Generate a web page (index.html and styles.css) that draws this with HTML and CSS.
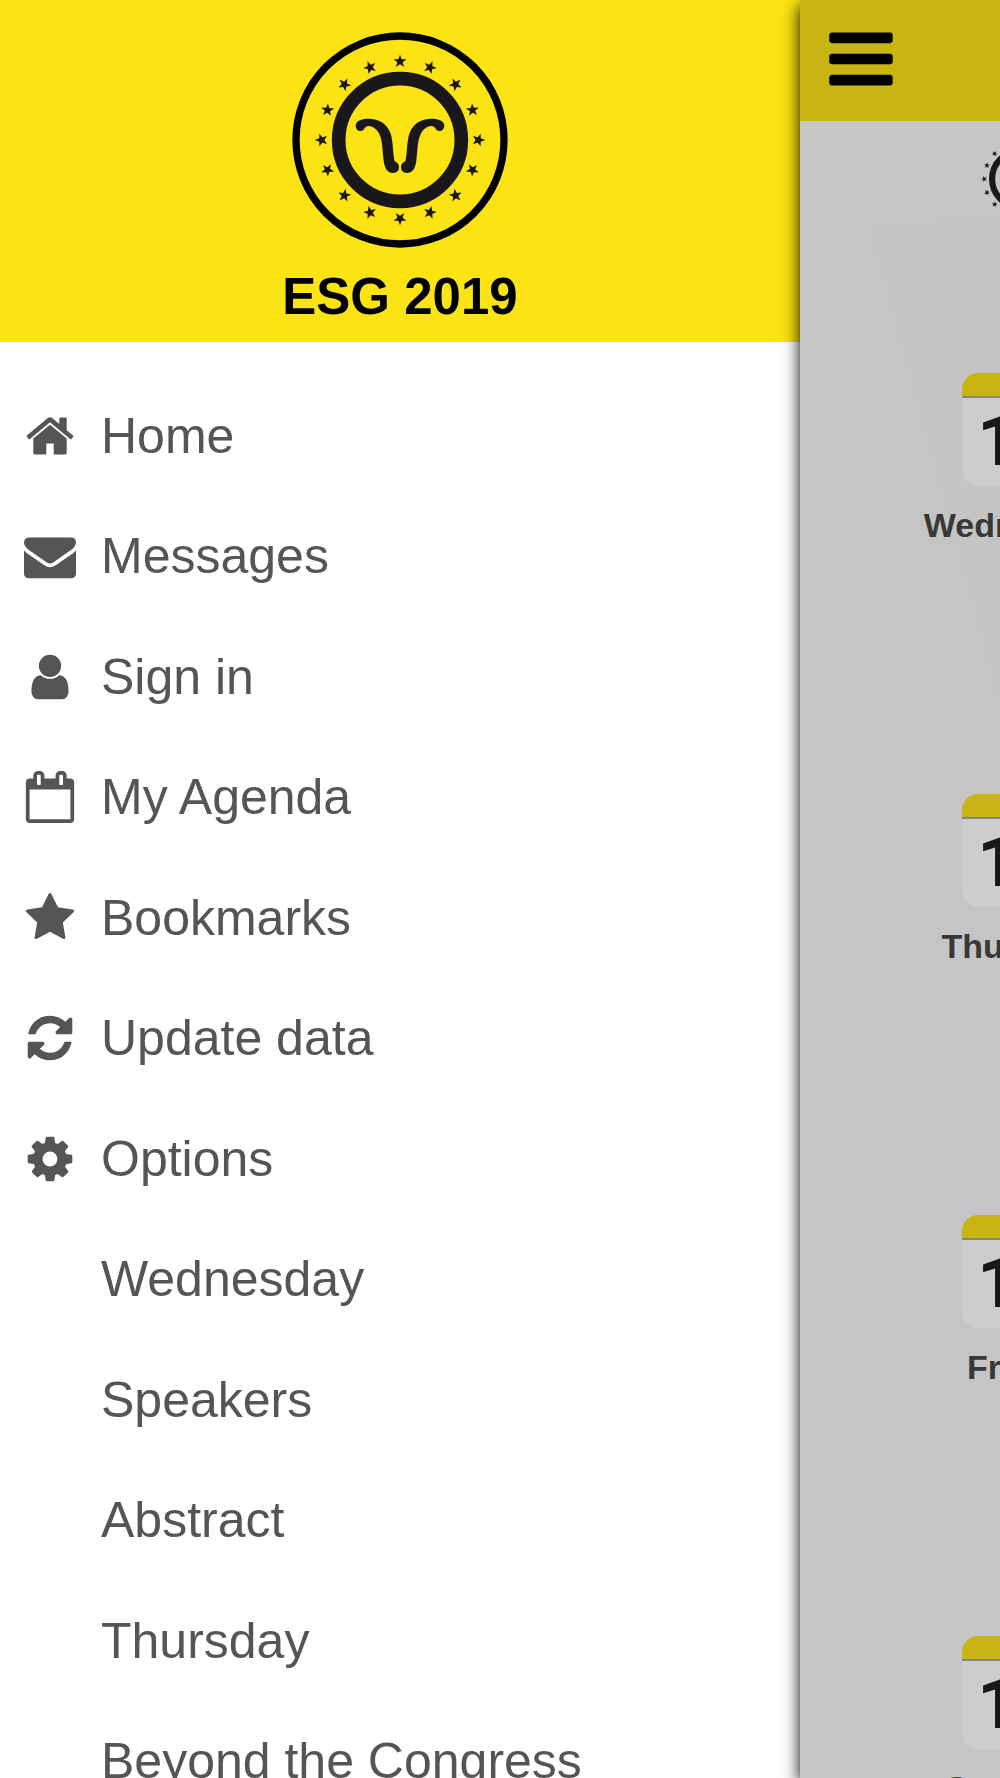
FILE: index.html
```html
<!DOCTYPE html>
<html lang="en">
<head>
<meta charset="utf-8">
<meta name="viewport" content="width=device-width, initial-scale=1">
<title>ESG 2019</title>
<link rel="stylesheet" href="styles.css">
</head>
<body>
<svg class="sprite" aria-hidden="true">
  <symbol id="emblem" viewBox="-204 -257 408 514">
    <defs>
      <path id="star" d="M0-20L5-6H19L8 3L12 17L0 9L-12 17L-8 3L-19-6H-5Z"/>
    </defs>
    <circle r="184" fill="none" stroke="currentColor" stroke-width="41"/>
    <g fill="currentColor">
      <use href="#star" transform="translate(0 -236)"/>
      <use href="#star" transform="translate(90 -218) rotate(22.5)"/>
      <use href="#star" transform="translate(167 -167) rotate(45)"/>
      <use href="#star" transform="translate(218 -90) rotate(67.5)"/>
      <use href="#star" transform="translate(236 0) rotate(90)"/>
      <use href="#star" transform="translate(218 90) rotate(112.5)"/>
      <use href="#star" transform="translate(167 167) rotate(135)"/>
      <use href="#star" transform="translate(90 218) rotate(157.5)"/>
      <use href="#star" transform="translate(0 236) rotate(180)"/>
      <use href="#star" transform="translate(-90 218) rotate(202.5)"/>
      <use href="#star" transform="translate(-167 167) rotate(225)"/>
      <use href="#star" transform="translate(-218 90) rotate(247.5)"/>
      <use href="#star" transform="translate(-236 0) rotate(270)"/>
      <use href="#star" transform="translate(-218 -90) rotate(292.5)"/>
      <use href="#star" transform="translate(-167 -167) rotate(315)"/>
      <use href="#star" transform="translate(-90 -218) rotate(337.5)"/>
      <path id="horn" d="M-133-43C-133-57-116-64-95-64C-64-64-40-50-29-22C-20 2-22 40-16 64C-8 67-3 73-3 82C-3 93-11 99-20 99C-38 99-46 84-49 62C-53 30-52-2-64-22C-72-35-84-42-94-42C-106-42-108-27-117-27C-127-27-133-34-133-43Z"/>
      <use href="#horn" transform="scale(-1 1)"/>
    </g>
  </symbol>
</svg>

<div class="app">
  <aside class="drawer">
    <header class="drawer-head">
      <svg class="drawer-logo" viewBox="-324 -324 648 648" role="img" aria-label="ESG emblem">
        <circle r="312" fill="none" stroke="#000" stroke-width="22"/>
        <use href="#emblem" x="-204" y="-257" width="408" height="514"/>
      </svg>
      <h1 class="drawer-title">ESG 2019</h1>
    </header>
    <nav aria-label="Main menu">
      <ul class="menu">
        <li><a class="menu-link" href="#home"><svg class="icon" viewBox="0 0 1792 1792"><path d="M1472 992v480q0 26-19 45t-45 19h-384v-384h-256v384h-384q-26 0-45-19t-19-45v-480q0-1 .5-3t.5-3l575-474 575 474q1 2 1 6zm223-69l-62 74q-8 9-21 11h-3q-13 0-21-7l-692-577-692 577q-12 8-24 7-13-2-21-11l-62-74q-8-10-7-23.5t11-21.5l719-599q32-26 76-26t76 26l244 204v-195q0-14 9-23t23-9h192q14 0 23 9t9 23v408l219 182q10 8 11 21.5t-7 23.5z"/></svg>Home</a></li>
        <li><a class="menu-link" href="#messages"><svg class="icon" viewBox="0 0 1792 1792"><path d="M1792 710v794q0 66-47 113t-113 47h-1472q-66 0-113-47t-47-113v-794q44 49 101 87 362 246 497 345 57 42 92.5 65.5t94.5 48 110 24.5h2q51 0 110-24.5t94.5-48 92.5-65.5q170-123 498-345 57-39 100-87zm0-294q0 79-49 151t-122 123q-376 261-468 325-10 7-42.5 31t-54 38.5-52 32.5-57.5 27-50 9h-2q-23 0-50-9t-57.5-27-52-32.5-54-38.5-42.5-31q-91-64-262-182.5t-205-142.5q-62-42-117-115.5t-55-136.5q0-78 41.5-130t118.5-52h1472q65 0 112.5 47t47.5 113z"/></svg>Messages</a></li>
        <li><a class="menu-link" href="#signin"><svg class="icon" viewBox="0 0 1792 1792"><path d="M1536 1399q0 109-62.5 187t-150.5 78h-854q-88 0-150.5-78t-62.5-187q0-85 8.5-160.5t31.5-152 58.5-131 94-89 134.5-34.5q131 128 313 128t313-128q76 0 134.5 34.5t94 89 58.5 131 31.5 152 8.5 160.5zm-256-887q0 159-112.5 271.5t-271.5 112.5-271.5-112.5-112.5-271.5 112.5-271.5 271.5-112.5 271.5 112.5 112.5 271.5z"/></svg>Sign in</a></li>
        <li><a class="menu-link" href="#agenda"><svg class="icon" viewBox="0 0 1792 1792"><path d="M192 1664h1408v-1024h-1408v1024zm384-1216v-288q0-14-9-23t-23-9h-64q-14 0-23 9t-9 23v288q0 14 9 23t23 9h64q14 0 23-9t9-23zm768 0v-288q0-14-9-23t-23-9h-64q-14 0-23 9t-9 23v288q0 14 9 23t23 9h64q14 0 23-9t9-23zm384-64v1280q0 52-38 90t-90 38h-1408q-52 0-90-38t-38-90v-1280q0-52 38-90t90-38h128v-96q0-66 47-113t113-47h64q66 0 113 47t47 113v96h384v-96q0-66 47-113t113-47h64q66 0 113 47t47 113v96h128q52 0 90 38t38 90z"/></svg>My Agenda</a></li>
        <li><a class="menu-link" href="#bookmarks"><svg class="icon" viewBox="0 0 1792 1792"><path d="M1728 647q0 22-26 48l-363 354 86 500q1 7 1 20 0 21-10.5 35.5t-30.5 14.5q-19 0-40-12l-449-236-449 236q-22 12-40 12-21 0-31.5-14.5t-10.5-35.5q0-6 2-20l86-500-364-354q-25-27-25-48 0-37 56-46l502-73 225-455q19-41 49-41t49 41l225 455 502 73q56 9 56 46z"/></svg>Bookmarks</a></li>
        <li><a class="menu-link" href="#update"><svg class="icon" viewBox="0 0 1792 1792"><path d="M1639 1056q0 5-1 7-64 268-268 434.5t-478 166.5q-146 0-282.5-55t-243.5-157l-129 129q-19 19-45 19t-45-19-19-45v-448q0-26 19-45t45-19h448q26 0 45 19t19 45-19 45l-137 137q71 66 161 102t187 36q134 0 250-65t186-179q11-17 53-117 8-23 30-23h192q13 0 22.5 9.5t9.5 22.5zm25-800v448q0 26-19 45t-45 19h-448q-26 0-45-19t-19-45 19-45l138-138q-148-137-349-137-134 0-250 65t-186 179q-11 17-53 117-8 23-30 23h-199q-13 0-22.5-9.5t-9.5-22.5v-7q65-268 270-434.5t480-166.5q146 0 284 55.5t245 156.5l130-129q19-19 45-19t45 19 19 45z"/></svg>Update data</a></li>
        <li><a class="menu-link" href="#options"><svg class="icon" viewBox="0 0 1792 1792"><path d="M1152 896q0-106-75-181t-181-75-181 75-75 181 75 181 181 75 181-75 75-181zm512-109v222q0 12-8 23t-20 13l-185 28q-19 54-39 91 35 50 107 138 10 12 10 25t-9 23q-27 37-99 108t-94 71q-12 0-26-9l-138-108q-44 23-91 38-16 136-29 186-7 28-36 28h-222q-14 0-24.5-8.5t-11.5-21.5l-28-184q-49-16-90-37l-141 107q-10 9-25 9-14 0-25-11-126-114-165-168-7-10-7-23 0-12 8-23 15-21 51-66.5t54-70.5q-27-50-41-99l-183-27q-13-2-21-12.5t-8-23.5v-222q0-12 8-23t19-13l186-28q14-46 39-92-40-57-107-138-10-12-10-24 0-10 9-23 26-36 98.5-107.5t94.5-71.5q13 0 26 10l138 107q44-23 91-38 16-136 29-186 7-28 36-28h222q14 0 24.5 8.5t11.5 21.5l28 184q49 16 90 37l142-107q9-9 24-9 13 0 25 10 129 119 165 170 7 8 7 22 0 12-8 23-15 21-51 66.5t-54 70.5q26 50 41 98l183 28q13 2 21 12.5t8 23.5z"/></svg>Options</a></li>
        <li><a class="menu-link menu-link--plain" href="#wednesday">Wednesday</a></li>
        <li><a class="menu-link menu-link--plain" href="#speakers">Speakers</a></li>
        <li><a class="menu-link menu-link--plain" href="#abstract">Abstract</a></li>
        <li><a class="menu-link menu-link--plain" href="#thursday">Thursday</a></li>
        <li><a class="menu-link menu-link--plain" href="#beyond">Beyond the Congress</a></li>
      </ul>
    </nav>
  </aside>

  <main class="page">
    <header class="topbar">
      <button class="menu-button" type="button" aria-label="Close menu">
        <svg viewBox="0 0 1792 1792"><path d="M1664 1344v128q0 26-19 45t-45 19h-1408q-26 0-45-19t-19-45v-128q0-26 19-45t45-19h1408q26 0 45 19t19 45zm0-512v128q0 26-19 45t-45 19h-1408q-26 0-45-19t-19-45v-128q0-26 19-45t45-19h1408q26 0 45 19t19 45zm0-512v128q0 26-19 45t-45 19h-1408q-26 0-45-19t-19-45v-128q0-26 19-45t45-19h1408q26 0 45 19t19 45z"/></svg>
      </button>
    </header>
    <div class="banner">
      <svg class="banner-logo" viewBox="-257 -257 514 514" role="img" aria-label="ESG emblem"><use href="#emblem" x="-204" y="-257" width="408" height="514"/></svg>
    </div>
    <div class="days">
      <a class="day" href="#wednesday"><span class="day-icon">16</span>Wednesday</a>
      <a class="day" href="#thursday"><span class="day-icon">17</span>Thursday</a>
      <a class="day" href="#friday"><span class="day-icon">18</span>Friday</a>
      <a class="day" href="#saturday"><span class="day-icon">19</span>Saturday</a>
    </div>
  </main>
</div>
</body>
</html>
```
FILE: styles.css
```css
* {
  box-sizing: border-box;
}

body {
  margin: 0;
  background: #fff;
  color: #555;
  font-family: "Liberation Sans", Arial, sans-serif;
}

a {
  color: inherit;
  text-decoration: none;
}

.sprite {
  position: absolute;
  width: 0;
  height: 0;
}

#emblem {
  overflow: visible;
}

.app {
  display: flex;
  height: 100vh;
  overflow: hidden;
}

/* Drawer */

.drawer {
  flex: 0 0 80%;
  overflow: hidden;
  background: #fff;
}

.drawer-head {
  display: flex;
  flex-direction: column;
  align-items: center;
  gap: 20px;
  height: 342px;
  padding-top: 32px;
  background: #fbe314;
  color: #000;
}

.drawer-logo {
  width: 216px;
  height: 216px;
  color: #1a171b;
}

.drawer-title {
  margin: 0;
  font-size: 51px;
  line-height: 58px;
}

.menu {
  margin: 0;
  padding: 34px 0 0;
  list-style: none;
}

.menu li {
  height: 120px;
}

.menu li:nth-child(even) {
  height: 121px;
}

.menu-link {
  display: flex;
  align-items: center;
  gap: 25px;
  padding-left: 24px;
  font-size: 50px;
  line-height: 120px;
  white-space: nowrap;
}

.menu-link--plain {
  padding-left: 101px;
}

.icon {
  width: 52px;
  height: 52px;
  fill: currentColor;
}

/* Page pushed aside by the open drawer */

.page {
  flex: 0 0 100%;
  background: linear-gradient(75deg, #c6c6c6, #c2c2c2);
  box-shadow: 0 6px 16px #000;
}

.topbar {
  display: flex;
  align-items: center;
  height: 121px;
  padding: 0 24px 4px;
  background: #c9b511;
}

.menu-button {
  width: 74px;
  height: 74px;
  padding: 0;
  border: 0;
  background: none;
}

.menu-button svg {
  display: block;
  width: 100%;
  height: 100%;
}

.banner {
  display: flex;
  align-items: center;
  justify-content: center;
  width: 44%;
  height: 96px;
  margin-bottom: 156px;
  padding-top: 20px;
  background: #c6c6c6;
}

.banner-logo {
  width: 78px;
  height: 78px;
  color: #1a1a18;
}

.days {
  display: flex;
  flex-direction: column;
  gap: 251px;
  width: 436px;
}

.day {
  display: flex;
  flex-direction: column;
  align-items: center;
  gap: 21px;
  color: #383838;
  font-size: 34px;
  font-weight: bold;
  line-height: 36px;
}

.day-icon {
  width: 113px;
  height: 113px;
  border-top: 23px solid #c9b511;
  border-radius: 16px;
  background: #cdcdcd;
  box-shadow: inset 0 2px #8a8678;
  color: #181818;
  font-family: Roboto, "Open Sans", sans-serif;
  font-size: 71px;
  line-height: 90px;
  text-align: center;
}
```
